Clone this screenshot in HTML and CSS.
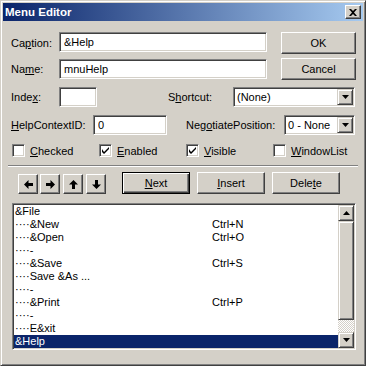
FILE: index.html
```html
<!DOCTYPE html>
<html lang="en">
<head>
  <meta charset="UTF-8" />
  <title>Menu Editor</title>
  <link rel="stylesheet" href="styles.css">
</head>
<body>
  <div class="window">
    <div class="titlebar">
      <span class="title">Menu Editor</span>
      <span class="close">
        <svg width="8" height="7" viewBox="0 0 8 7"><path d="M0 0h2l2 2 2-2h2L5 3.5 8 7H6L4 5 2 7H0l3-3.5z" fill="#000"/></svg>
      </span>
    </div>

    <div class="body">
      <div class="row r1">
        <label class="lbl w48">Ca<u>p</u>tion:</label>
        <input class="field caption" type="text" value="&amp;Help">
        <button class="btn side">OK</button>
      </div>

      <div class="row r2">
        <label class="lbl w48">Na<u>m</u>e:</label>
        <input class="field caption name" type="text" value="mnuHelp">
        <button class="btn side">Cancel</button>
      </div>

      <div class="row r3">
        <label class="lbl w48">Inde<u>x</u>:</label>
        <input class="field index" type="text" value="">
        <label class="lbl shortcut-lbl">S<u>h</u>ortcut:</label>
        <div class="combo shortcut">
          <span class="val">(None)</span>
          <span class="drop"><svg width="7" height="4" viewBox="0 0 7 4"><path d="M0 0h7L3.5 4z" fill="#000"/></svg></span>
        </div>
      </div>

      <div class="row r4">
        <label class="lbl help-lbl"><u>H</u>elpContextID:</label>
        <input class="field helpid" type="text" value="0">
        <label class="lbl neg-lbl">Neg<u>o</u>tiatePosition:</label>
        <div class="combo negotiate">
          <span class="val">0 - None</span>
          <span class="drop"><svg width="7" height="4" viewBox="0 0 7 4"><path d="M0 0h7L3.5 4z" fill="#000"/></svg></span>
        </div>
      </div>

      <div class="row checks">
        <div class="cb"><span class="box"></span><span><u>C</u>hecked</span></div>
        <div class="cb"><span class="box"><svg width="7" height="7" viewBox="0 0 7 7"><path d="M0 2v3l2 2 5-5V0L2 5z" fill="#000"/></svg></span><span><u>E</u>nabled</span></div>
        <div class="cb"><span class="box"><svg width="7" height="7" viewBox="0 0 7 7"><path d="M0 2v3l2 2 5-5V0L2 5z" fill="#000"/></svg></span><span><u>V</u>isible</span></div>
        <div class="cb"><span class="box"></span><span><u>W</u>indowList</span></div>
      </div>

      <div class="sep"></div>

      <div class="row tools">
        <button class="btn arrow a1"><svg width="9" height="9" viewBox="0 0 9 9"><path d="M0 4.5L4.5 0v3H9v3H4.5v3z" fill="#000"/></svg></button>
        <button class="btn arrow a2"><svg width="9" height="9" viewBox="0 0 9 9"><path d="M9 4.5L4.5 0v3H0v3h4.5v3z" fill="#000"/></svg></button>
        <button class="btn arrow a3"><svg width="9" height="9" viewBox="0 0 9 9"><path d="M4.5 0L9 4.5H6V9H3V4.5H0z" fill="#000"/></svg></button>
        <button class="btn arrow a3"><svg width="9" height="9" viewBox="0 0 9 9"><path d="M4.5 9L9 4.5H6V0H3v4.5H0z" fill="#000"/></svg></button>
        <button class="btn wide default next"><u>N</u>ext</button>
        <button class="btn wide"><u>I</u>nsert</button>
        <button class="btn wide">Dele<u>t</u>e</button>
      </div>

      <div class="list">
        <div class="items">
          <div class="item"><span class="nm">&amp;File</span></div>
          <div class="item"><span class="nm">····&amp;New</span><span>Ctrl+N</span></div>
          <div class="item"><span class="nm">····&amp;Open</span><span>Ctrl+O</span></div>
          <div class="item"><span class="nm">····-</span></div>
          <div class="item"><span class="nm">····&amp;Save</span><span>Ctrl+S</span></div>
          <div class="item"><span class="nm">····Save &amp;As ...</span></div>
          <div class="item"><span class="nm">····-</span></div>
          <div class="item"><span class="nm">····&amp;Print</span><span>Ctrl+P</span></div>
          <div class="item"><span class="nm">····-</span></div>
          <div class="item"><span class="nm">····E&amp;xit</span></div>
          <div class="item selected"><span class="nm">&amp;Help</span></div>
        </div>
        <div class="scroll">
          <span class="sbtn"><svg width="7" height="4" viewBox="0 0 7 4"><path d="M0 4h7L3.5 0z" fill="#000"/></svg></span>
          <span class="thumb"></span>
          <span class="track"></span>
          <span class="sbtn"><svg width="7" height="4" viewBox="0 0 7 4"><path d="M0 0h7L3.5 4z" fill="#000"/></svg></span>
        </div>
      </div>
    </div>
  </div>
</body>
</html>
```

FILE: styles.css
```css
body {
  margin: 0;
  background: #d4d0c8;
}
.window {
  width: 366px;
  height: 366px;
  box-sizing: border-box;
  background: #d4d0c8;
  border: 1px solid;
  border-color: #d4d0c8 #404040 #404040 #d4d0c8;
  box-shadow: inset 1px 1px #fff, inset -1px -1px #808080;
  padding: 2px;
  font-family: "Liberation Sans", Arial, sans-serif;
  font-size: 11px;
  color: #000;
}
.titlebar {
  height: 18px;
  background: linear-gradient(to right, #0a246a, #a6caf0);
  display: flex;
  align-items: center;
  justify-content: space-between;
  padding-left: 2px;
  color: #fff;
  font-weight: bold;
  font-size: 11.5px;
}
.close {
  width: 16px;
  height: 14px;
  margin-right: 2px;
  box-sizing: border-box;
  background: #d4d0c8;
  border: 1px solid;
  border-color: #fff #404040 #404040 #fff;
  box-shadow: inset -1px -1px #808080;
  display: flex;
  align-items: center;
  justify-content: center;
}
.body {
  padding: 11px 0 0 8px;
}
.row {
  display: flex;
  align-items: flex-start;
}
.lbl {
  height: 20px;
  line-height: 20px;
  white-space: nowrap;
}
.w48 { width: 48px; }

.field {
  box-sizing: border-box;
  height: 20px;
  margin: 0;
  padding: 0 0 0 4px;
  border: 1px solid;
  border-color: #808080 #fff #fff #808080;
  box-shadow: inset 1px 1px #404040, inset -1px -1px #d4d0c8;
  background: #fff;
  font: inherit;
  color: #000;
  outline: none;
}
.btn {
  box-sizing: border-box;
  height: 22px;
  margin: 0;
  padding: 0;
  background: #d4d0c8;
  border: 1px solid;
  border-color: #fff #404040 #404040 #fff;
  box-shadow: inset -1px -1px #808080;
  font: inherit;
  color: #000;
  display: flex;
  align-items: center;
  justify-content: center;
}
.btn.default {
  border-color: #000;
  box-shadow: inset 1px 1px #fff, inset -1px -1px #404040, inset -2px -2px #808080;
}

/* top rows */
.r1 { height: 22px; }
.r1 .lbl { margin-top: 1px; }
.caption { width: 208px; }
.side {
  width: 75px;
  margin-left: 14px;
}
.r2 {
  height: 22px;
  margin-top: 4px;
}
.r2 .lbl, .r2 .field { margin-top: 1px; }
.r3 {
  height: 20px;
  margin-top: 7px;
}
.index { width: 38px; }
.shortcut-lbl {
  margin-left: 71px;
  width: 65px;
}
.r4 {
  height: 20px;
  margin-top: 8px;
}
.help-lbl { width: 82px; }
.helpid { width: 74px; }
.neg-lbl {
  margin-left: 19px;
  width: 98px;
}

.combo {
  box-sizing: border-box;
  height: 20px;
  display: flex;
  border: 1px solid;
  border-color: #808080 #fff #fff #808080;
  box-shadow: inset 1px 1px #404040, inset -1px -1px #d4d0c8;
  padding: 1px;
  background: #fff;
}
.combo .val {
  flex: 1;
  line-height: 16px;
  padding-left: 2px;
}
.combo .drop {
  width: 16px;
  height: 16px;
  box-sizing: border-box;
  background: #d4d0c8;
  border: 1px solid;
  border-color: #d4d0c8 #404040 #404040 #d4d0c8;
  box-shadow: inset 1px 1px #fff, inset -1px -1px #808080;
  display: flex;
  align-items: center;
  justify-content: center;
}
.shortcut { width: 122px; }
.negotiate { width: 71px; }

/* checkboxes */
.checks {
  margin-top: 9px;
  height: 13px;
  padding-left: 1px;
}
.cb {
  width: 87px;
  display: flex;
  align-items: center;
  gap: 5px;
  white-space: nowrap;
}
.box {
  width: 13px;
  height: 13px;
  box-sizing: border-box;
  border: 1px solid;
  border-color: #808080 #fff #fff #808080;
  box-shadow: inset 1px 1px #404040, inset -1px -1px #d4d0c8;
  background: #fff;
  display: flex;
  align-items: center;
  justify-content: center;
}
.sep {
  margin: 8px 0 0 -3px;
  width: 350px;
  border-top: 1px solid #808080;
  border-bottom: 1px solid #fff;
}

/* tool buttons */
.tools {
  margin-top: 5px;
  height: 22px;
}
.arrow {
  width: 20px;
  height: 20px;
  margin-top: 2px;
}
.a1 { margin-left: 7px; }
.a2 { margin-left: 2px; }
.a3 { margin-left: 3px; }
.wide {
  width: 68px;
  margin-left: 7px;
}
.next { margin-left: 16px; }

/* list */
.list {
  margin: 9px 0 0 1px;
  width: 344px;
  height: 147px;
  box-sizing: border-box;
  display: flex;
  border: 1px solid;
  border-color: #808080 #fff #fff #808080;
  box-shadow: inset 1px 1px #404040, inset -1px -1px #d4d0c8;
  padding: 1px;
  background: #fff;
}
.items { flex: 1; }
.item {
  height: 13px;
  line-height: 13px;
  padding-left: 1px;
  display: flex;
  white-space: nowrap;
}
.item .nm { width: 197px; }
.item.selected {
  background: #0a246a;
  color: #fff;
}
.scroll {
  width: 16px;
  display: flex;
  flex-direction: column;
}
.sbtn, .thumb {
  box-sizing: border-box;
  background: #d4d0c8;
  border: 1px solid;
  border-color: #d4d0c8 #404040 #404040 #d4d0c8;
  box-shadow: inset 1px 1px #fff, inset -1px -1px #808080;
}
.sbtn {
  height: 16px;
  display: flex;
  align-items: center;
  justify-content: center;
}
.thumb { height: 99px; }
.track {
  flex: 1;
  background: repeating-conic-gradient(#fff 0 25%, #d4d0c8 0 50%) 0 0 / 2px 2px;
}
```
